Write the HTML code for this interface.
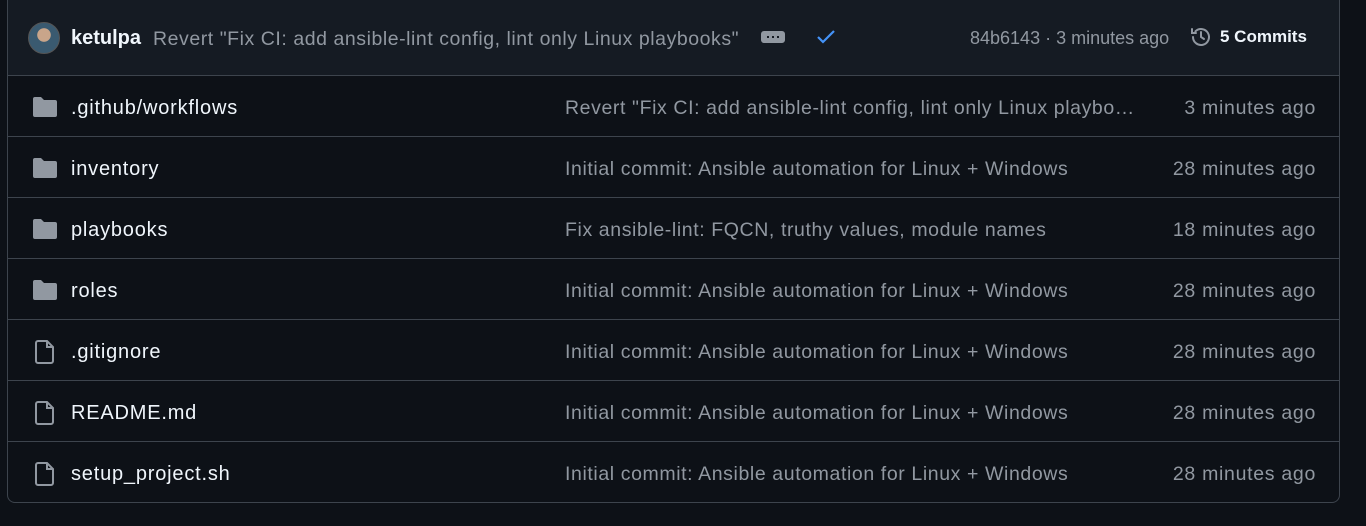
<!DOCTYPE html>
<html><head><style>
body{margin:0;background:#0d1117;width:1366px;height:526px;overflow:hidden;font-family:"Liberation Sans",sans-serif;}
.box{position:absolute;left:7px;top:-10px;width:1331px;height:511px;border:1px solid #3d444d;border-radius:8px;overflow:hidden;}
.hdr{position:absolute;left:0;top:0;width:100%;height:84px;background:#151b23;border-bottom:1px solid #3d444d;}
.t{position:absolute;white-space:nowrap;font-size:19px;}
.row{position:absolute;left:0;width:100%;height:60px;border-top:1px solid #3d444d;}
.nm{position:absolute;left:63px;top:21px;color:#f0f6fc;font-size:20px;letter-spacing:0.8px;}
.msg{position:absolute;left:557px;top:21px;color:#9198a1;font-size:19.5px;white-space:nowrap;letter-spacing:0.6px;}
.tm{position:absolute;right:23px;top:21px;color:#9198a1;font-size:19.5px;letter-spacing:0.7px;}
.ic{position:absolute;left:24px;top:20px;}
</style></head><body>
<div class="box">
<div class="hdr">
 <div style="position:absolute;left:20px;top:31px;width:30px;height:30px;border-radius:50%;background:radial-gradient(circle at 50% 40%,#c9a58a 0 28%,#3a5a70 30% 100%);border:1px solid #555"></div>
 <div class="t" style="left:63px;top:36px;color:#f0f6fc;font-weight:bold;font-size:20px">ketulpa</div>
 <div class="t" style="left:145px;top:37px;color:#9198a1;font-size:19.5px;letter-spacing:0.55px">Revert "Fix CI: add ansible-lint config, lint only Linux playbooks"</div>
 <div style="position:absolute;left:753px;top:40px;width:24px;height:12px;background:#9198a1;border-radius:3px"></div>
 <div style="position:absolute;left:759px;top:45px;width:12px;height:2px;background:repeating-linear-gradient(90deg,#151b23 0 2px,transparent 2px 5px)"></div>
 <svg style="position:absolute;left:808px;top:37px" width="20" height="18" viewBox="0 0 20 18"><path d="M2 9l5 5L18 3" stroke="#4493f8" stroke-width="2.2" fill="none"/></svg>
 <div class="t" style="left:962px;top:37px;color:#9198a1;font-size:18px">84b6143 · 3 minutes ago</div>
 <svg style="position:absolute;left:1181px;top:34px" width="24" height="24" viewBox="0 0 24 24"><path d="M4 12a8 8 0 1 0 2.4-5.7M3 4v4h4M12 7v5l3 2" stroke="#9198a1" stroke-width="2" fill="none" stroke-linecap="round"/></svg>
 <div class="t" style="left:1212px;top:36px;color:#f0f6fc;font-weight:bold;font-size:17px">5 Commits</div>
</div>
<div style="position:absolute;top:85px;left:0;width:100%">
 <div class="row" style="top:0;border-top:none"><svg class="ic" width="26" height="22" viewBox="0 0 26 22"><path d="M1 3a2 2 0 0 1 2-2h6l3 3h11a2 2 0 0 1 2 2v13a2 2 0 0 1-2 2H3a2 2 0 0 1-2-2z" fill="#9198a1"/></svg><div class="nm">.github/workflows</div><div class="msg">Revert "Fix CI: add ansible-lint config, lint only Linux playbo…</div><div class="tm">3 minutes ago</div></div>
 <div class="row" style="top:60px"><svg class="ic" width="26" height="22" viewBox="0 0 26 22"><path d="M1 3a2 2 0 0 1 2-2h6l3 3h11a2 2 0 0 1 2 2v13a2 2 0 0 1-2 2H3a2 2 0 0 1-2-2z" fill="#9198a1"/></svg><div class="nm">inventory</div><div class="msg">Initial commit: Ansible automation for Linux + Windows</div><div class="tm">28 minutes ago</div></div>
 <div class="row" style="top:121px"><svg class="ic" width="26" height="22" viewBox="0 0 26 22"><path d="M1 3a2 2 0 0 1 2-2h6l3 3h11a2 2 0 0 1 2 2v13a2 2 0 0 1-2 2H3a2 2 0 0 1-2-2z" fill="#9198a1"/></svg><div class="nm">playbooks</div><div class="msg">Fix ansible-lint: FQCN, truthy values, module names</div><div class="tm">18 minutes ago</div></div>
 <div class="row" style="top:182px"><svg class="ic" width="26" height="22" viewBox="0 0 26 22"><path d="M1 3a2 2 0 0 1 2-2h6l3 3h11a2 2 0 0 1 2 2v13a2 2 0 0 1-2 2H3a2 2 0 0 1-2-2z" fill="#9198a1"/></svg><div class="nm">roles</div><div class="msg">Initial commit: Ansible automation for Linux + Windows</div><div class="tm">28 minutes ago</div></div>
 <div class="row" style="top:243px"><svg class="ic" style="left:27px" width="20" height="24" viewBox="0 0 20 24"><path d="M3 1h9l6 6v14a2 2 0 0 1-2 2H3a2 2 0 0 1-2-2V3a2 2 0 0 1 2-2zM12 1v6h6" stroke="#9198a1" stroke-width="2" fill="none"/></svg><div class="nm">.gitignore</div><div class="msg">Initial commit: Ansible automation for Linux + Windows</div><div class="tm">28 minutes ago</div></div>
 <div class="row" style="top:304px"><svg class="ic" style="left:27px" width="20" height="24" viewBox="0 0 20 24"><path d="M3 1h9l6 6v14a2 2 0 0 1-2 2H3a2 2 0 0 1-2-2V3a2 2 0 0 1 2-2zM12 1v6h6" stroke="#9198a1" stroke-width="2" fill="none"/></svg><div class="nm">README.md</div><div class="msg">Initial commit: Ansible automation for Linux + Windows</div><div class="tm">28 minutes ago</div></div>
 <div class="row" style="top:365px"><svg class="ic" style="left:27px" width="20" height="24" viewBox="0 0 20 24"><path d="M3 1h9l6 6v14a2 2 0 0 1-2 2H3a2 2 0 0 1-2-2V3a2 2 0 0 1 2-2zM12 1v6h6" stroke="#9198a1" stroke-width="2" fill="none"/></svg><div class="nm">setup_project.sh</div><div class="msg">Initial commit: Ansible automation for Linux + Windows</div><div class="tm">28 minutes ago</div></div>
</div>
</div>
</body></html>
